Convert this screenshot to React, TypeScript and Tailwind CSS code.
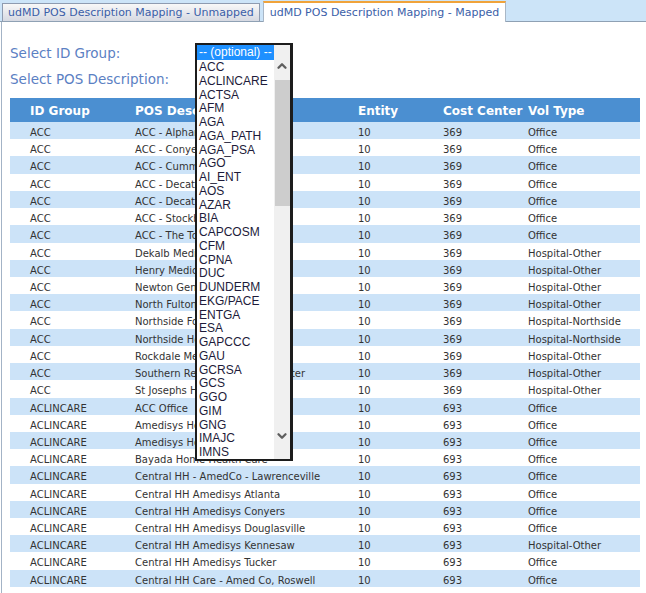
import { ChevronDown, ChevronUp } from "lucide-react";

type Row = {
  group: string;
  pos: string;
  entity: string;
  cost: string;
  vol: string;
};

const rows: Row[] = [
  { group: "ACC", pos: "ACC - Alpharetta", entity: "10", cost: "369", vol: "Office" },
  { group: "ACC", pos: "ACC - Conyers", entity: "10", cost: "369", vol: "Office" },
  { group: "ACC", pos: "ACC - Cumming", entity: "10", cost: "369", vol: "Office" },
  { group: "ACC", pos: "ACC - Decatur", entity: "10", cost: "369", vol: "Office" },
  { group: "ACC", pos: "ACC - Decatur 2", entity: "10", cost: "369", vol: "Office" },
  { group: "ACC", pos: "ACC - Stockbridge", entity: "10", cost: "369", vol: "Office" },
  { group: "ACC", pos: "ACC - The Tower", entity: "10", cost: "369", vol: "Office" },
  { group: "ACC", pos: "Dekalb Medical Center", entity: "10", cost: "369", vol: "Hospital-Other" },
  { group: "ACC", pos: "Henry Medical Center", entity: "10", cost: "369", vol: "Hospital-Other" },
  { group: "ACC", pos: "Newton General", entity: "10", cost: "369", vol: "Hospital-Other" },
  { group: "ACC", pos: "North Fulton Hospital", entity: "10", cost: "369", vol: "Hospital-Other" },
  { group: "ACC", pos: "Northside Forsyth", entity: "10", cost: "369", vol: "Hospital-Northside" },
  { group: "ACC", pos: "Northside Hospital", entity: "10", cost: "369", vol: "Hospital-Northside" },
  { group: "ACC", pos: "Rockdale Medical", entity: "10", cost: "369", vol: "Hospital-Other" },
  { group: "ACC", pos: "Southern Regional Medical Center", entity: "10", cost: "369", vol: "Hospital-Other" },
  { group: "ACC", pos: "St Josephs Hospital", entity: "10", cost: "369", vol: "Hospital-Other" },
  { group: "ACLINCARE", pos: "ACC Office", entity: "10", cost: "693", vol: "Office" },
  { group: "ACLINCARE", pos: "Amedisys Home Health", entity: "10", cost: "693", vol: "Office" },
  { group: "ACLINCARE", pos: "Amedisys Hospice", entity: "10", cost: "693", vol: "Office" },
  { group: "ACLINCARE", pos: "Bayada Home Health Care", entity: "10", cost: "693", vol: "Office" },
  { group: "ACLINCARE", pos: "Central HH - AmedCo - Lawrenceville", entity: "10", cost: "693", vol: "Office" },
  { group: "ACLINCARE", pos: "Central HH Amedisys Atlanta", entity: "10", cost: "693", vol: "Office" },
  { group: "ACLINCARE", pos: "Central HH Amedisys Conyers", entity: "10", cost: "693", vol: "Office" },
  { group: "ACLINCARE", pos: "Central HH Amedisys Douglasville", entity: "10", cost: "693", vol: "Office" },
  { group: "ACLINCARE", pos: "Central HH Amedisys Kennesaw", entity: "10", cost: "693", vol: "Hospital-Other" },
  { group: "ACLINCARE", pos: "Central HH Amedisys Tucker", entity: "10", cost: "693", vol: "Office" },
  { group: "ACLINCARE", pos: "Central HH Care - Amed Co, Roswell", entity: "10", cost: "693", vol: "Office" },
];

const groups = [
  "ACC", "ACLINCARE", "ACTSA", "AFM", "AGA", "AGA_PATH", "AGA_PSA", "AGO", "AI_ENT", "AOS",
  "AZAR", "BIA", "CAPCOSM", "CFM", "CPNA", "DUC", "DUNDERM", "EKG/PACE", "ENTGA", "ESA",
  "GAPCCC", "GAU", "GCRSA", "GCS", "GGO", "GIM", "GNG", "IMAJC", "IMNS",
];

const cols = "grid grid-cols-[105px_223px_85px_85px_132px]";

const GroupListbox = () => (
  <div className="absolute left-[195px] top-[43px] flex h-[418px] w-[98px] border-2 border-r-[3px] border-[#1c1c1c] bg-white font-['Liberation_Sans',Arial,sans-serif] text-[12px] text-[#1d1b3a]">
    <div className="flex-1 overflow-hidden">
      <div className="h-[15px] bg-[#1e90ff] pl-[2px] leading-[15px] text-white">-- (optional) --</div>
      {groups.map((g) => (
        <div key={g} className="h-[13.75px] pl-[2px] leading-[15px]">
          {g}
        </div>
      ))}
    </div>
    <div className="flex w-[16px] flex-col items-center bg-[#f0f0f0]">
      <div className="flex h-[33px] w-full items-end justify-center pb-[5px]">
        <ChevronUp size={14} strokeWidth={4} color="#5f5f5f" />
      </div>
      <div className="mt-[2px] h-[126px] w-[15px] bg-[#cdcdcd]" />
      <div className="flex-1" />
      <div className="flex h-[31px] w-full items-start justify-center pt-[1px]">
        <ChevronDown size={14} strokeWidth={4} color="#5f5f5f" />
      </div>
    </div>
  </div>
);

export default function App() {
  return (
    <div className="relative h-[593px] w-[646px] overflow-hidden bg-white font-['DejaVu_Sans',Verdana,sans-serif]">
      <div className="flex h-[22px] items-end gap-[3px] border-b border-[#8fa1b4] bg-[#cce4f8] pl-[2px]">
        <div className="h-[18px] border border-b-0 border-[#8e9bb0] bg-gradient-to-b from-[#f8f8f8] to-[#d6d9e2] px-[5px] text-[11px] leading-[17px] text-[#3a5ea8]">
          udMD POS Description Mapping - Unmapped
        </div>
        <div className="-mb-px h-[21px] border border-t-2 border-b-0 border-[#a9b7c6] border-t-[#f0a33a] bg-white px-[6px] text-[11px] leading-[19px] text-[#3a5ea8]">
          udMD POS Description Mapping - Mapped
        </div>
      </div>
      <div className="ml-[1px] h-[571px] border-l border-[#a3b3c6] pl-[8px] pt-[18px]">
        <div className="h-[26px] text-[13.5px] leading-[26px] text-[#5b80c3]">Select ID Group:</div>
        <div className="h-[26px] text-[13.5px] leading-[26px] text-[#5b80c3]">Select POS Description:</div>
        <div className="mt-[6px] w-[630px]">
          <div className={`${cols} h-[24px] items-center bg-[#4b8fd1] pt-px text-[12px] font-bold text-white`}>
            <div className="pl-[20px]">ID Group</div>
            <div className="pl-[20px]">POS Description</div>
            <div className="pl-[20px]">Entity</div>
            <div className="pl-[20px] whitespace-nowrap">Cost Center</div>
            <div className="pl-[20px]">Vol Type</div>
          </div>
          {rows.map((r, i) => (
            <div
              key={i}
              className={`${cols} h-[17.22px] items-center pt-[3px] text-[10px] text-[#333] ${i % 2 === 0 ? "bg-[#cce3f8]" : "bg-white"}`}
            >
              <div className="pl-[20px]">{r.group}</div>
              <div className="pl-[20px] whitespace-nowrap">{r.pos}</div>
              <div className="pl-[20px]">{r.entity}</div>
              <div className="pl-[20px]">{r.cost}</div>
              <div className="pl-[20px]">{r.vol}</div>
            </div>
          ))}
        </div>
      </div>
      <GroupListbox />
    </div>
  );
}
